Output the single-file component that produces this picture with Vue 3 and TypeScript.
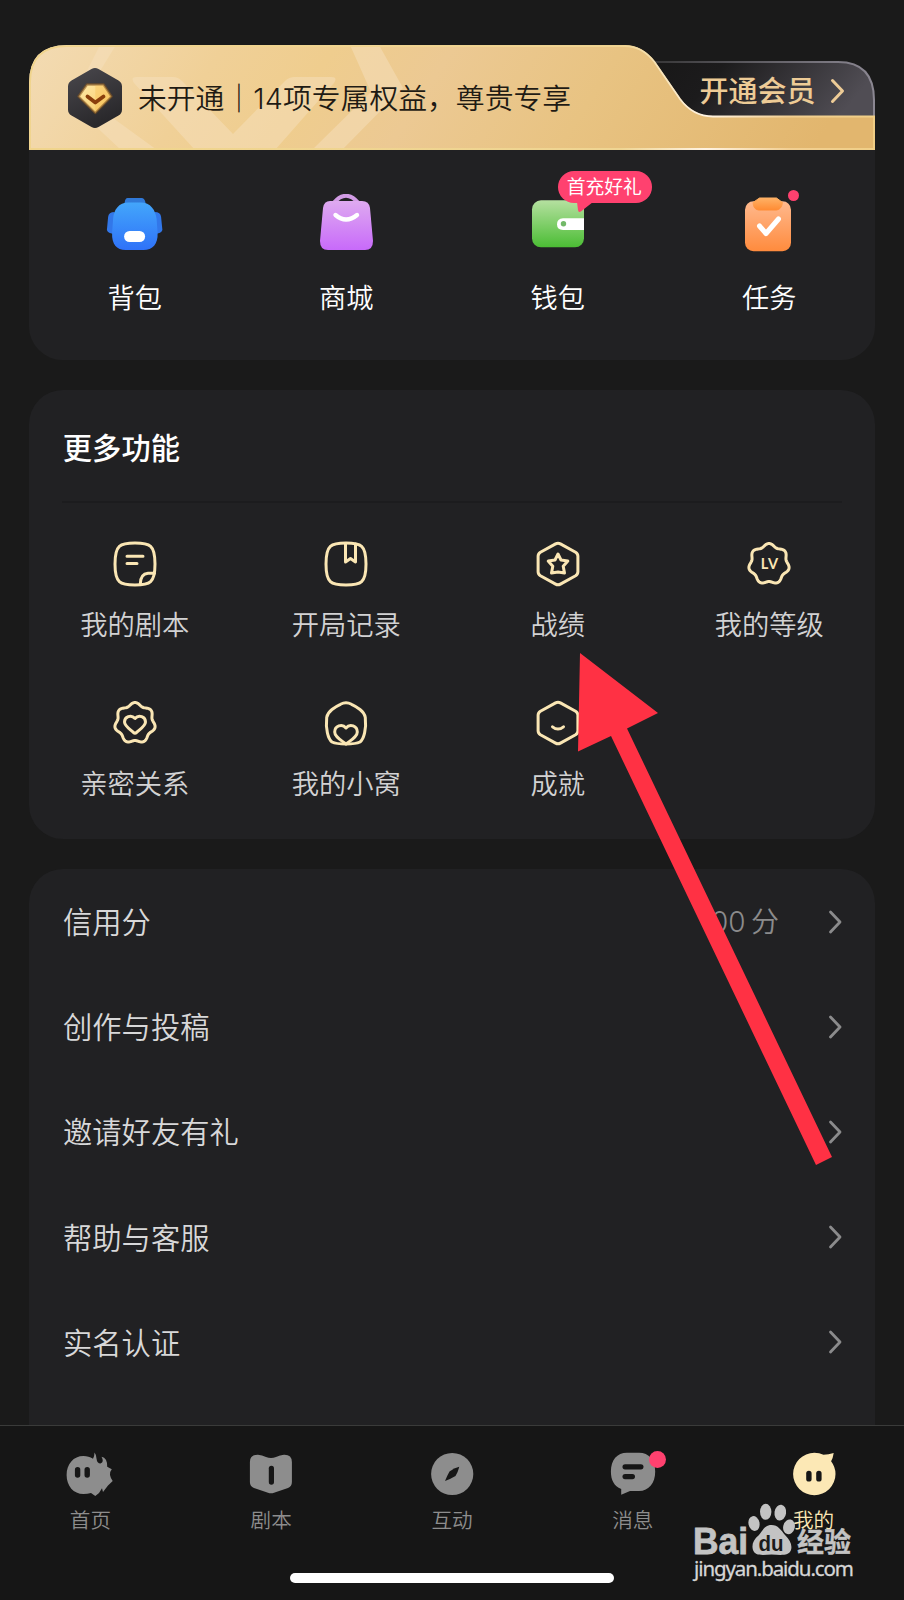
<script setup lang="ts">
interface Feature { label: string; icon: string }
interface Row { label: string; value?: number; unit?: string }

const shortcuts: Feature[] = [
  { label: '背包', icon: 'bag' },
  { label: '商城', icon: 'shop' },
  { label: '钱包', icon: 'wallet' },
  { label: '任务', icon: 'task' },
]
const features: Feature[] = [
  { label: '我的剧本', icon: 'script' },
  { label: '开局记录', icon: 'record' },
  { label: '战绩', icon: 'star' },
  { label: '我的等级', icon: 'level' },
  { label: '亲密关系', icon: 'intimacy' },
  { label: '我的小窝', icon: 'nest' },
  { label: '成就', icon: 'achievement' },
]
const rows: Row[] = [
  { label: '信用分', value: 100, unit: '分' },
  { label: '创作与投稿' },
  { label: '邀请好友有礼' },
  { label: '帮助与客服' },
  { label: '实名认证' },
]
const tabs: Feature[] = [
  { label: '首页', icon: 'home' },
  { label: '剧本', icon: 'book' },
  { label: '互动', icon: 'compass' },
  { label: '消息', icon: 'chat' },
  { label: '我的', icon: 'me' },
]

// Seven-lobed rosette outline, one lobe pointing up
function rosette(cx: number, cy: number, r: number, wave: number): string {
  const pts: string[] = []
  for (let i = 0; i < 140; i++) {
    const t = (i / 140) * Math.PI * 2
    const d = r + wave * Math.cos(7 * t)
    pts.push(`${(cx + d * Math.sin(t)).toFixed(2)} ${(cy - d * Math.cos(t)).toFixed(2)}`)
  }
  return 'M' + pts.join('L') + 'Z'
}
const badge = rosette(24, 24, 19, 1.5)
const hexagon = 'M21.6 3.9Q24 2.6 26.4 3.9L41.6 12.3Q43.9 13.7 43.9 16.3V31.7Q43.9 34.3 41.6 35.7L26.4 44.1Q24 45.4 21.6 44.1L6.4 35.7Q4.1 34.3 4.1 31.7V16.3Q4.1 13.7 6.4 12.3Z'
const squircle = 'M24 3.1C39 3.1 44 5 44 24S39 44.9 24 44.9 4 43 4 24 9 3.1 24 3.1Z'
</script>

<template>
  <div class="screen">
    <main class="content">
      <section class="card vip-card">
        <header class="banner">
          <svg class="banner-bg" viewBox="0 0 846 105">
            <defs>
              <linearGradient id="gold" x1="0" x2="1" y1="0" y2="0.08">
                <stop offset="0" stop-color="#f3dbb3" />
                <stop offset="0.23" stop-color="#f0d097" />
                <stop offset="0.36" stop-color="#efcd8e" />
                <stop offset="0.5" stop-color="#ecc993" />
                <stop offset="0.7" stop-color="#e8c382" />
                <stop offset="1" stop-color="#e2b66e" />
              </linearGradient>
              <linearGradient id="dark" x1="0" x2="1" y1="0" y2="0.2">
                <stop offset="0" stop-color="#161616" />
                <stop offset="0.4" stop-color="#1c1b1c" />
                <stop offset="1" stop-color="#504d54" />
              </linearGradient>
              <linearGradient id="darkEdge" x1="0" x2="1" y1="0" y2="0">
                <stop offset="0" stop-color="#2a2a2a" />
                <stop offset="1" stop-color="#8b8792" />
              </linearGradient>
              <linearGradient id="goldEdge" x1="0" x2="1" y1="0" y2="0">
                <stop offset="0" stop-color="#f0d48c" />
                <stop offset="0.7" stop-color="#efd593" />
                <stop offset="0.8" stop-color="#fff3e2" />
                <stop offset="0.9" stop-color="#f2cf92" />
                <stop offset="1" stop-color="#f0cf87" />
              </linearGradient>
              <linearGradient id="hexDark" x1="0" x2="0.4" y1="0" y2="1">
                <stop offset="0" stop-color="#4a484d" />
                <stop offset="1" stop-color="#29282b" />
              </linearGradient>
              <linearGradient id="gem" x1="0" x2="1" y1="0" y2="1">
                <stop offset="0" stop-color="#ffe9a8" />
                <stop offset="1" stop-color="#f6c862" />
              </linearGradient>
              <clipPath id="goldClip">
                <path d="M0 105V38Q0 0 38 0H596Q613 0 625.500 16L651 53Q664 71 684 71H846V105Z" />
              </clipPath>
            </defs>
            <path d="M590 17H809Q845 17 845 55V80H590Z" fill="url(#dark)" stroke="url(#darkEdge)" stroke-width="2" />
            <g clip-path="url(#goldClip)">
              <rect width="846" height="105" fill="url(#gold)" />
              <g fill="#f6e0bd" opacity="0.5">
                <path d="M71 0H87L55 52L128 105H92L42 58Z" />
                <path d="M108 32H144Q149 32 153 36L204 89L256 36Q260 32 266 32H302Q309 32 305 38L246 105H166L105 38Q101 32 108 32Z" />
                <path d="M321 0H350L374 43L313 105H283L342 47Z" />
              </g>
            </g>
            <path d="M1 105V38Q1 1.200 38 1.200H596Q613 1.200 625.500 17L651 54Q664 71.500 684 71.500H845V104H1" fill="none" stroke="url(#goldEdge)" stroke-width="1.800" />
            <path d="M62.500 23.900Q66 22 69.500 23.900L89.500 35.500Q93 37.500 93 41.500V64.500Q93 68.500 89.500 70.500L69.500 82Q66 84 62.500 82L42.500 70.500Q39 68.500 39 64.500V41.500Q39 37.500 42.500 35.500Z" fill="url(#hexDark)" />
            <path d="M58 39.500H74.500L82.500 51.500L66.300 68L49.500 51.500Z" fill="url(#gem)" stroke="#8a5a22" stroke-opacity="0.600" stroke-width="2.400" stroke-linejoin="round" />
            <path d="M66.300 40.500H74L81 51.500L66.300 66.500Z" fill="#f5b94a" opacity="0.350" />
            <path d="M58.500 51.500L66.300 57.500L74.500 51.500" fill="none" stroke="#8a3f0c" stroke-width="3.800" stroke-linecap="round" stroke-linejoin="round" />
          </svg>
          <p class="banner-text">未开通<span class="bar">｜</span><span class="count">14</span>项专属权益，尊贵专享</p>
          <div class="join">
            <span>开通会员</span>
            <svg class="join-arrow" viewBox="0 0 16 26"><path d="M2.500 2.500L12.500 13L2.500 23.500" /></svg>
          </div>
        </header>

        <div class="shortcuts">
          <div v-for="s in shortcuts" :key="s.icon" class="shortcut">
            <div class="shortcut-icon">
              <svg v-if="s.icon === 'bag'" viewBox="0.400 0 60 60">
                <defs>
                  <linearGradient id="blue" x1="0" x2="0" y1="0" y2="1"><stop offset="0" stop-color="#43a6fb" /><stop offset="1" stop-color="#2f72f8" /></linearGradient>
                </defs>
                <path d="M23 4H37Q40 4 41 9V14H19L20 9Q20.500 4 23 4Z" fill="#3079d8" />
                <path d="M10 18Q4 18 3.500 23L2.300 36Q3 39.500 10 40ZM50 18Q56 18 56.500 23L57.800 36Q57 39.500 50 40Z" fill="#3277e9" />
                <path d="M24 8.500H36C46 8.500 51 16 52 25L53 39C53.500 50 48 56 39 56H21C12 56 7 50 7.500 39L8.500 25C9 16 14 8.500 24 8.500Z" fill="url(#blue)" />
                <rect x="19.500" y="37" width="21" height="11" rx="5.500" fill="#fff" />
              </svg>
              <svg v-else-if="s.icon === 'shop'" viewBox="0 0 60 60">
                <defs>
                  <linearGradient id="purple" x1="0" x2="0" y1="0" y2="1"><stop offset="0" stop-color="#deaaf0" /><stop offset="1" stop-color="#c86afa" /></linearGradient>
                </defs>
                <path d="M18 8.500Q30-5 42 8.500" fill="none" stroke="#d29ce5" stroke-width="4" />
                <path d="M14 7H46Q53 7 54 14L57 47Q57 56 49 56H12Q4 56 4 47L7 14Q8 7 14 7Z" fill="url(#purple)" />
                <path d="M19.500 21Q30 30 41 21" fill="none" stroke="#fff" stroke-width="4.400" stroke-linecap="round" />
              </svg>
              <svg v-else-if="s.icon === 'wallet'" viewBox="0 0 60 60">
                <defs>
                  <linearGradient id="green" x1="0" x2="0" y1="0" y2="1"><stop offset="0" stop-color="#b5e0a0" /><stop offset="1" stop-color="#4bbd34" /></linearGradient>
                </defs>
                <rect x="4" y="6.300" width="52" height="47" rx="9" fill="url(#green)" />
                <path d="M35 24.300H56V36H35Q29 35.700 29 30.200T35 24.300Z" fill="#fff" />
                <circle cx="35.500" cy="29.700" r="2.700" fill="#72b968" />
              </svg>
              <svg v-else viewBox="-0.500 0 60 60">
                <defs>
                  <linearGradient id="orange" x1="0" x2="0" y1="0" y2="1"><stop offset="0" stop-color="#ffb98e" /><stop offset="1" stop-color="#ff8b3d" /></linearGradient>
                  <linearGradient id="clip" x1="0" x2="0" y1="0" y2="1"><stop offset="0" stop-color="#ffb165" /><stop offset="1" stop-color="#ff8c34" /></linearGradient>
                </defs>
                <rect x="5.500" y="7.300" width="46" height="50" rx="8.500" fill="url(#orange)" />
                <path d="M20 4H37L43 8.500Q42 15.500 37 16H19Q14 15.500 13.500 8.500Z" fill="url(#clip)" stroke="url(#clip)" stroke-linejoin="round" />
                <path d="M20 32L26.500 39.500L39 25" fill="none" stroke="#fff" stroke-width="5" stroke-linecap="round" stroke-linejoin="round" />
              </svg>
              <span v-if="s.icon === 'wallet'" class="bubble">首充好礼
                <svg class="bubble-tail" viewBox="0 0 16 12"><path d="M0 0H16L4.500 9Q1.500 11.500 1 8Z" /></svg>
              </span>
              <i v-if="s.icon === 'task'" class="dot" />
            </div>
            <span class="shortcut-label">{{ s.label }}</span>
          </div>
        </div>
      </section>

      <section class="card more-card">
        <h2 class="title">更多功能</h2>
        <div class="features">
          <div v-for="f in features" :key="f.icon" class="feature">
            <svg class="line-icon" viewBox="0 0 48 48">
              <template v-if="f.icon === 'script'">
                <path :d="squircle" />
                <path d="M16 16.200H32M16 23.500H26M29.300 44Q29.500 34 37 33.300H43.500" />
              </template>
              <template v-else-if="f.icon === 'record'">
                <path :d="squircle" />
                <path d="M23.500 4V22L28.500 18.500L33.500 22V4" />
              </template>
              <template v-else-if="f.icon === 'star'">
                <path :d="hexagon" />
                <path d="M24 14L27 20L33.800 21L29.200 26.200L30.500 33L24 32L17.500 33L18.800 26.200L14.200 21L21 20Z" />
              </template>
              <template v-else-if="f.icon === 'level'">
                <path :d="badge" />
                <text x="24.900" y="29.300" text-anchor="middle">LV</text>
              </template>
              <template v-else-if="f.icon === 'intimacy'">
                <path :d="badge" />
                <path d="M24 19.500C20 15 13.500 18 13.500 23C13.500 27 20 31 22.500 33.500Q24 34.800 25.500 33.500C28 31 34.500 27 34.500 23C34.500 18 28 15 24 19.500Z" />
              </template>
              <template v-else-if="f.icon === 'nest'">
                <path d="M18.500 5.300Q24 2.300 29.500 5.300Q34 7.300 38 10.500Q42.500 14 43.300 18.500C44.500 30 42 40 38 43Q34 45 24 45T10 43C6 40 3.500 30 4.700 18.500Q5.500 14 10 10.500Q14 7.300 18.500 5.300Z" />
                <path d="M24 29C20 24 12.700 27 12.700 33C12.700 38 19 41 24 45C29 41 35.300 38 35.300 33C35.300 27 28 24 24 29Z" />
              </template>
              <template v-else>
                <path :d="hexagon" />
                <path d="M18.500 27.800Q24 32.300 29.500 27.800" />
              </template>
            </svg>
            <span class="feature-label">{{ f.label }}</span>
          </div>
        </div>
      </section>

      <section class="card list-card">
        <div v-for="r in rows" :key="r.label" class="row">
          <span class="row-label">{{ r.label }}</span>
          <span v-if="r.value" class="row-value">{{ r.value }} <span class="unit">{{ r.unit }}</span></span>
          <svg class="chevron" viewBox="0 0 16 26"><path d="M3.500 3L13 13L3.500 23" /></svg>
        </div>
      </section>
    </main>

    <nav class="tabbar">
      <div v-for="t in tabs" :key="t.icon" class="tab" :class="{ active: t.icon === 'me' }">
        <div class="tab-icon">
          <svg viewBox="0 0 48 48">
            <template v-if="t.icon === 'home'">
              <path d="M17.500 6C21 6 24 7 27 8.700Q28.500 6 28.500 2.500Q30.500 5 30.500 8.500Q31 13.500 34.500 13.500Q38.500 12 35.500 6.700Q41.500 8 41.200 16.700L45.800 19.300Q43.500 22 44 25T46.700 31L42 35.500L37 42L36 38.300Q34 43 29.300 46L25 43Q21.500 44 17.500 44C7.500 44 .6 36 .6 25S7.500 6 17.500 6Z" />
              <rect class="cut" x="8.900" y="17" width="5.400" height="10.800" rx="2.700" />
              <rect class="cut" x="18.500" y="17" width="5.400" height="10.800" rx="2.700" />
            </template>
            <template v-else-if="t.icon === 'book'">
              <path d="M11 4.700Q15 5 19 7Q24 9.200 29 7Q33 5 37 4.700Q44.900 4.500 44.900 12V32Q44.900 36.500 41 38L27 42.700Q24 43.700 21 42.700L7 38Q2.900 36.500 2.900 32V12Q2.900 4.500 11 4.700Z" />
              <rect class="cut" x="21.800" y="15.700" width="5.200" height="19" rx="2.600" />
            </template>
            <template v-else-if="t.icon === 'compass'">
              <circle cx="24.200" cy="24" r="21.100" />
              <path class="cut" d="M31.300 16.800Q26 18 21.500 21.500Q19 26 17 31Q22.500 29 27.500 26Q30 22 31.300 16.800Z" />
            </template>
            <template v-else-if="t.icon === 'chat'">
              <path d="M18 2.700H30C40 2.700 46.200 10 46.200 21.500S40 41 30 41H21L12.200 44.700V39C5 36 1.900 30 1.900 21.500C1.900 10 8 2.700 18 2.700Z" />
              <rect class="cut" x="13.500" y="14.200" width="21" height="5.200" rx="2.600" />
              <rect class="cut" x="13.500" y="24" width="12.500" height="5.200" rx="2.600" />
            </template>
            <template v-else>
              <path d="M24.300 2.800Q29.500 2.800 33.500 4.800Q38.500 4.500 43.700 3Q43 8 41.100 11.200Q45.500 17 45.500 24A21.200 21.200 0 1 1 24.300 2.800Z" />
              <rect class="cut" x="16.200" y="20.800" width="5.400" height="10.800" rx="2.700" />
              <rect class="cut" x="26.200" y="20.800" width="5.400" height="10.800" rx="2.700" />
            </template>
          </svg>
          <i v-if="t.icon === 'chat'" class="tab-dot" />
        </div>
        <span class="tab-label">{{ t.label }}</span>
      </div>
      <div class="home-indicator" />
    </nav>

    <svg class="watermark" viewBox="0 0 180 90">
      <g class="mark">
        <text class="brand" x="9" y="54" textLength="55" lengthAdjust="spacingAndGlyphs">Bai</text>
        <ellipse cx="70" cy="23.500" rx="5.500" ry="7.500" transform="rotate(-12 70 23.500)" />
        <ellipse cx="81.700" cy="11.800" rx="5.700" ry="8" />
        <ellipse cx="96.300" cy="12.600" rx="5.800" ry="8" transform="rotate(8 96.300 12.600)" />
        <ellipse cx="105" cy="26.800" rx="5.800" ry="7.500" transform="rotate(14 105 26.800)" />
        <path d="M87.500 25C94 25 97 30 101 35C106 40 108.500 45 107 50C105 56 97 55 87.500 54.500C78 55 71 56 69 50C67.500 45 69 40 75 35C79 30 81 25 87.500 25Z" />
        <text class="brand du" x="74.500" y="50.500" textLength="25" lengthAdjust="spacingAndGlyphs">du</text>
        <text class="jing" x="113" y="51.500" textLength="54">经验</text>
        <text class="url" x="10" y="75.500" textLength="160">jingyan.baidu.com</text>
      </g>
    </svg>

    <svg class="pointer" viewBox="0 0 256 514">
      <path d="M2 1L80 61L49 76.500L254 505L238 513L33 84L0 99.500Z" />
    </svg>
  </div>
</template>

<style>
body { background: #1a1a1a; }
</style>

<style scoped>
.screen {
  position: relative;
  width: 904px;
  height: 1600px;
  overflow: hidden;
  background: #1a1a1a;
  display: flex;
  flex-direction: column;
  font-family: "Noto Sans CJK SC", "Noto Sans", sans-serif;
  font-weight: 350;
  color: #fff;
}
.content {
  flex: 1;
  min-height: 0;
  overflow: hidden;
  padding: 45px 29px 0;
  display: flex;
  flex-direction: column;
  gap: 30px;
}
.card {
  flex: none;
  background: #212123;
  border-radius: 34px;
}
.vip-card {
  height: 315px;
  background: linear-gradient(transparent 104px, #212123 104px);
}
.banner {
  position: relative;
  height: 105px;
  display: flex;
  justify-content: space-between;
}
.banner-bg {
  position: absolute;
  inset: 0;
  width: 846px;
  height: 105px;
}
.banner-text {
  position: relative;
  margin: 0;
  padding-left: 109px;
  font-size: 28.800px;
  line-height: 104px;
  color: #1f1b14;
  white-space: nowrap;
}
.bar { font-weight: 500; }
.count {
  font-family: Inter, sans-serif;
  letter-spacing: 0.200px;
}
.join {
  position: relative;
  display: flex;
  align-items: center;
  gap: 14px;
  height: 87px;
  padding-right: 29.500px;
  font-size: 29px;
  font-weight: 500;
  color: #edcb96;
}
.join-arrow { width: 16px; height: 26px; margin-top: 4px; }
.join-arrow path {
  fill: none;
  stroke: #edcb96;
  stroke-width: 3;
  stroke-linecap: round;
  stroke-linejoin: round;
}
.shortcuts {
  display: grid;
  grid-template-columns: repeat(4, 1fr);
}
.shortcut {
  display: flex;
  flex-direction: column;
  align-items: center;
  padding-top: 44px;
}
.shortcut-icon {
  position: relative;
  width: 60px;
  height: 60px;
}
.shortcut-icon > svg { display: block; width: 60px; height: 60px; }
.shortcut-label {
  margin-top: 22px;
  font-size: 27.200px;
  line-height: 40px;
}
.bubble {
  position: absolute;
  left: 30px;
  top: -23px;
  width: 94px;
  height: 32px;
  border-radius: 16px;
  background: #ff416f;
  font-size: 18.800px;
  font-weight: 400;
  line-height: 30px;
  text-align: center;
  text-indent: -1px;
  white-space: nowrap;
}
.bubble-tail {
  position: absolute;
  left: 19px;
  top: 31px;
  width: 16px;
  height: 12px;
  fill: #ff416f;
}
.dot {
  position: absolute;
  left: 48.500px;
  top: -4.500px;
  width: 11px;
  height: 11px;
  border-radius: 50%;
  background: #ff416f;
}
.more-card { height: 449px; }
.title {
  margin: 0 33px;
  height: 111px;
  border-bottom: 2px solid #1c1c1e;
  text-indent: 0.800px;
  font-size: 29.300px;
  font-weight: 500;
  line-height: 112px;
}
.features {
  display: grid;
  grid-template-columns: repeat(4, 1fr);
  grid-auto-rows: 159px;
  padding-top: 36.600px;
}
.feature {
  display: flex;
  flex-direction: column;
  align-items: center;
}
.line-icon {
  width: 48px;
  height: 48px;
  fill: none;
  stroke: #fae6b4;
  stroke-width: 3;
  stroke-linecap: round;
  stroke-linejoin: round;
}
.line-icon text {
  fill: #fae6b4;
  stroke: none;
  font: 700 14.500px Lato, sans-serif;
  letter-spacing: 1px;
}
.feature-label {
  margin-top: 15.900px;
  font-size: 27.300px;
  line-height: 40px;
  color: #d2d2d3;
}
.list-card { height: 620px; }
.row {
  display: flex;
  align-items: center;
  height: 105.200px;
  padding: 0 32px 0 34px;
}
.row-label {
  flex: 1;
  margin-top: -3px;
  font-size: 29.300px;
  color: #d8d8d9;
}
.row-value {
  margin: -3px 48px 0 0;
  font-family: Inter, sans-serif;
  font-size: 28px;
  word-spacing: -2.500px;
  color: #8b8b8c;
}
.unit { font-family: "Noto Sans CJK SC", sans-serif; }
.chevron { width: 16px; height: 26px; }
.chevron path {
  fill: none;
  stroke: #8b8b8c;
  stroke-width: 2.800;
  stroke-linecap: round;
  stroke-linejoin: round;
}
.tabbar {
  position: relative;
  flex: none;
  box-sizing: border-box;
  height: 175px;
  border-top: 1px solid #3a3b3a;
  background: #161616;
  display: grid;
  grid-template-columns: repeat(5, 1fr);
}
.tab {
  display: flex;
  flex-direction: column;
  align-items: center;
  padding-top: 24px;
  color: #8d8d8d;
}
.tab-icon { position: relative; width: 48px; height: 48px; }
.tab-icon svg { display: block; width: 48px; height: 48px; fill: #8d8d8d; }
.active .tab-icon svg { fill: #fce8b5; }
.tab-icon .cut { fill: #161616; }
.tab-dot {
  position: absolute;
  left: 40.500px;
  top: 0.700px;
  width: 17px;
  height: 17px;
  border-radius: 50%;
  background: #ff416f;
}
.tab-label {
  margin-top: 6px;
  font-size: 20.600px;
  line-height: 30px;
}
.active .tab-label { color: #fce8b5; }
.home-indicator {
  position: absolute;
  left: 290px;
  bottom: 17px;
  width: 324px;
  height: 10px;
  border-radius: 5px;
  background: #fff;
}
.watermark {
  position: absolute;
  left: 684px;
  top: 1500px;
  width: 180px;
  height: 90px;
}
.mark { fill: #c3c3c3; }
.brand { font: 700 37px "Liberation Sans", sans-serif; stroke: #c3c3c3; stroke-width: 0.800; }
.du { font-size: 22px; fill: #1b1b1b; stroke: none; }
.jing { font: 700 27px "Noto Sans CJK SC", sans-serif; stroke: #c3c3c3; stroke-width: 0.400; }
.url { font: 400 20.500px "Noto Sans", sans-serif; fill: #d6d6d6; stroke: #d6d6d6; stroke-width: 0.300; }
.pointer {
  position: absolute;
  left: 578px;
  top: 652px;
  width: 256px;
  height: 514px;
  fill: #ff3144;
}
</style>
